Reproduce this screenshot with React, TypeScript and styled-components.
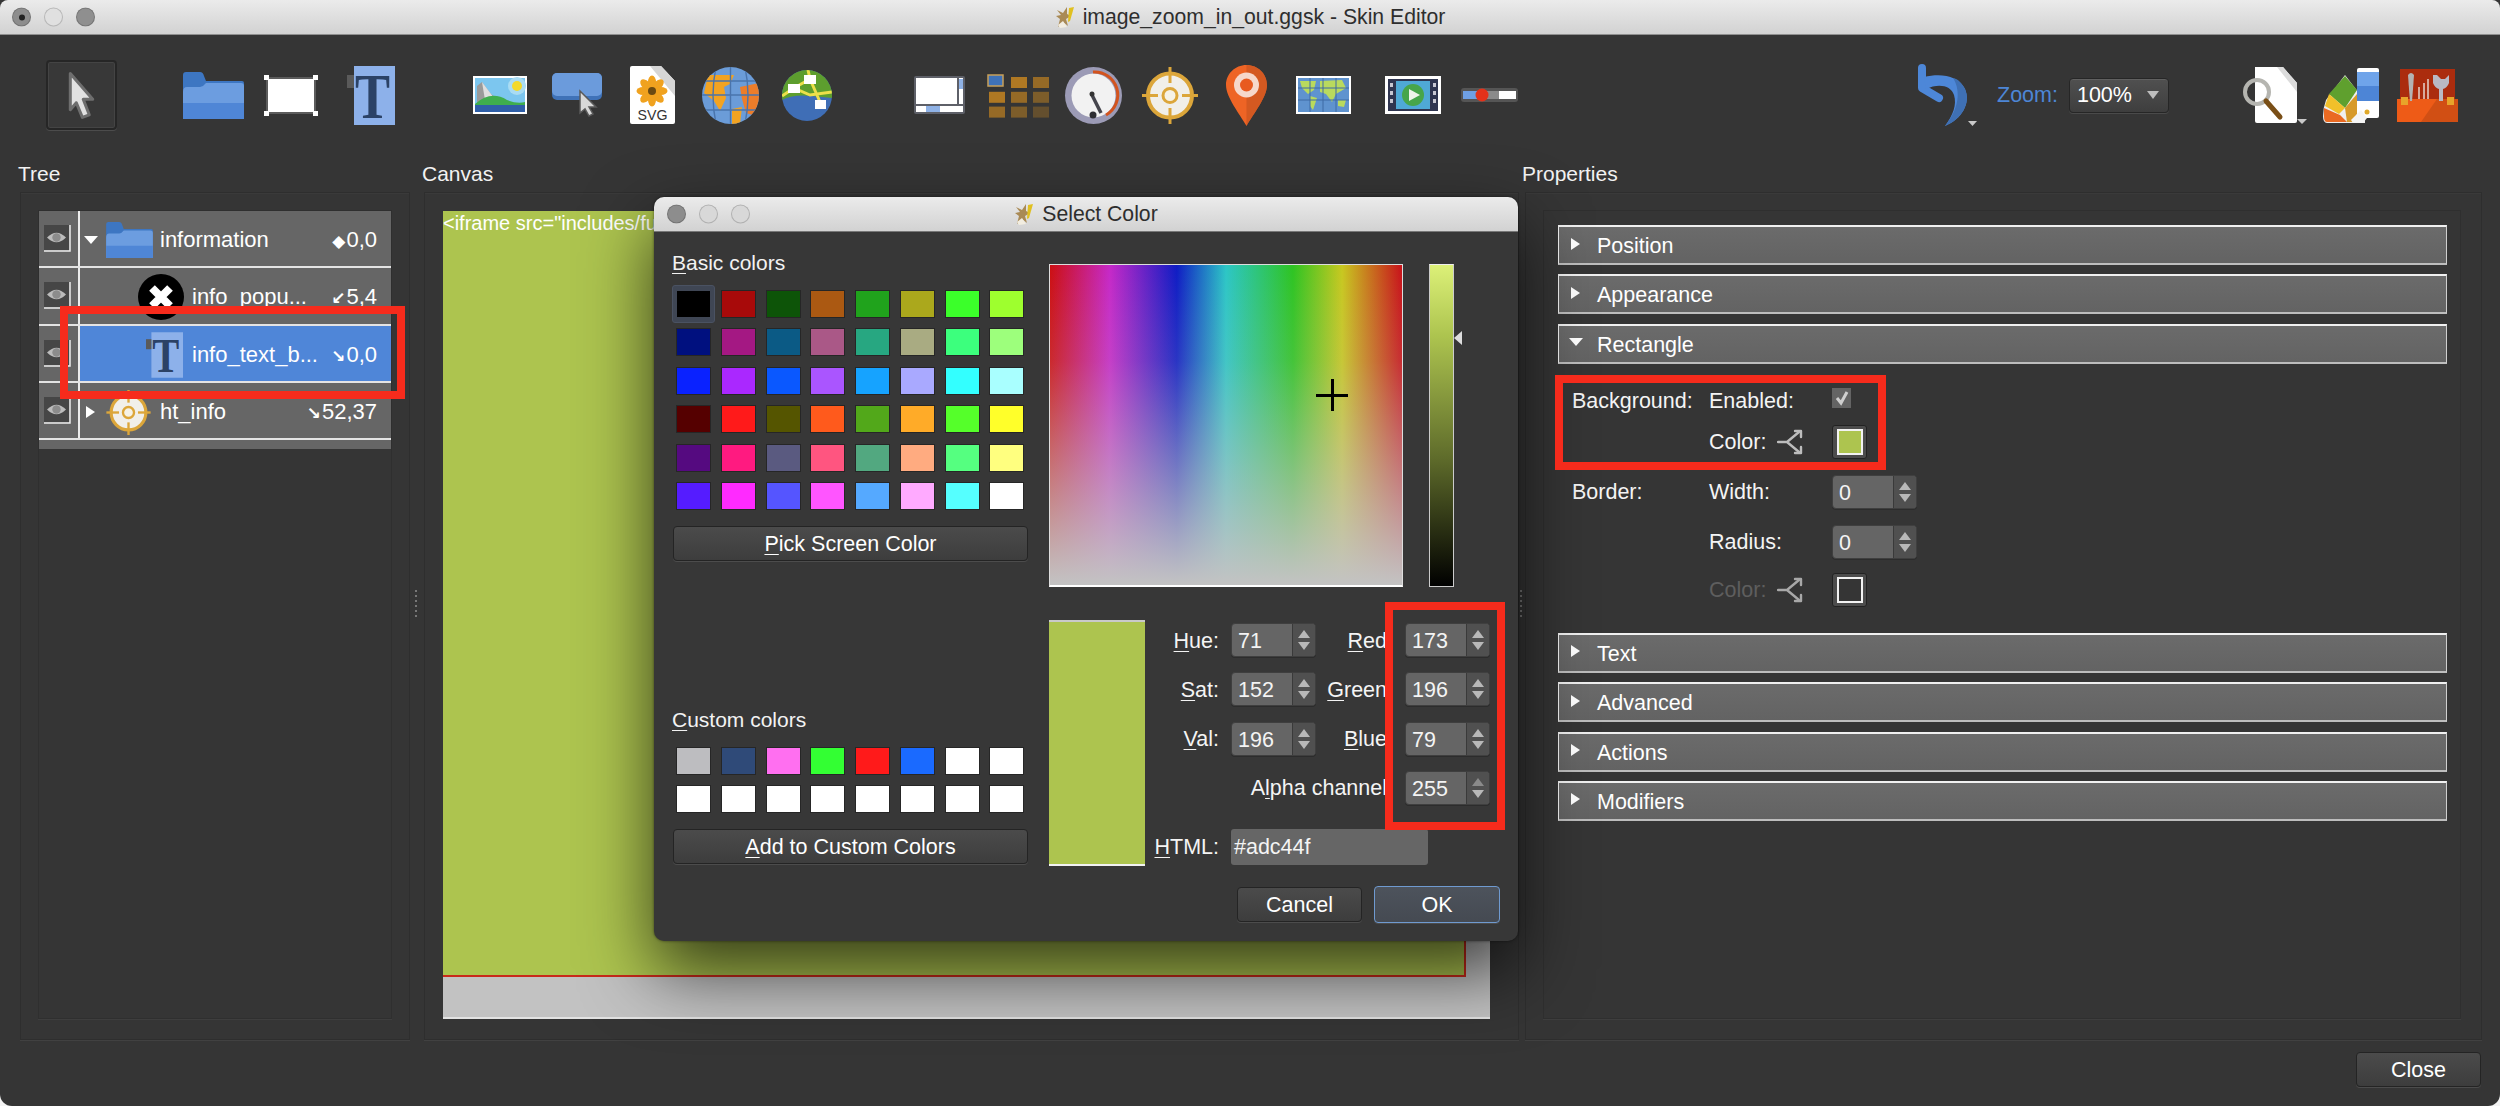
import React from "react";
import styled, { createGlobalStyle } from "styled-components";

const Global = createGlobalStyle`
  html, body { margin: 0; padding: 0; width: 2500px; height: 1106px; overflow: hidden; background: #f4f4f4; }
  #root { width: 2500px; height: 1106px; }
  * { box-sizing: border-box; }
`;

const FONT = `"Liberation Sans", Arial, "DejaVu Sans", sans-serif`;

const Win = styled.div`
  position: relative; width: 2500px; height: 1106px; background: #353535; overflow: hidden;
  border-radius: 0 0 12px 12px; display: flex; flex-direction: column;
  font-family: ${FONT}; font-size: 21.5px; color: #f4f4f4;
`;
const TitleBar = styled.div`
  position: relative; height: 35px; flex: none; display: flex; align-items: center; justify-content: center; gap: 8px;
  background: linear-gradient(#ebebeb, #d2d2d2); border-bottom: 1px solid #8f8f8f;
  color: #2e2e2e; font-size: 21.2px; border-radius: 8px 8px 0 0;
`;
const Lights = styled.div`
  position: absolute; top: 50%; transform: translateY(-50%); left: ${p => p.$left}px; display: flex; gap: ${p => p.$gap}px;
`;
const Light = styled.span`
  width: 19px; height: 19px; border-radius: 50%; border: 1px solid rgba(0,0,0,.18); position: relative;
  background: ${p => p.$c};
  &::after { content: ${p => (p.$dot ? '""' : "none")}; position: absolute; left: 6px; top: 6px; width: 6px; height: 6px; border-radius: 50%; background: #222; }
`;
const Toolbar = styled.div`
  height: 120px; flex: none; display: flex; align-items: center;
`;
const Slot = styled.div`
  flex: none; margin-left: ${p => p.$ml}px; display: flex; align-items: center;
  svg { display: block; overflow: visible; }
`;
const ArrowBtn = styled.div`
  width: 71px; height: 70px; border: 2px solid #262626; border-radius: 4px; background: #383838; box-shadow: 0 1px 0 #4c4c4c, inset 0 0 0 1px #444;
  display: flex; align-items: center; justify-content: center;
`;
const ZoomLabel = styled.span` color: #4d86d6; font-size: 21.5px; `;
const Combo = styled.div`
  width: 100px; height: 35px; border-radius: 4px; border: 1px solid #262626; box-shadow: inset 0 1px 0 #606060, 0 1px 0 #4a4a4a;
  background: linear-gradient(#505050, #3e3e3e); display: flex; align-items: center; justify-content: space-between; padding: 0 9px 0 7px;
  color: #fff; font-size: 21.5px;
`;
const Main = styled.div` flex: none; height: 885px; display: flex; padding-left: 18px; `;
const Column = styled.div` flex: none; width: ${p => p.$w}px; display: flex; flex-direction: column; `;
const PanelLabel = styled.div` height: 37px; line-height: 37px; flex: none; color: #f2f2f2; font-size: 21px; `;
const Frame = styled.div`
  flex: 1; margin-left: ${p => p.$ml}px; border: 1px solid #2e2e2e; box-shadow: 0 1px 0 #414141, inset 0 1px 0 #3a3a3a; background: #353535;
  padding: ${p => p.$pad}; display: flex; min-height: 0;
`;
const Handle = styled.div`
  flex: none; width: ${p => p.$w}px; display: flex; flex-direction: column; align-items: center; justify-content: center; gap: 3px; padding-top: 11px;
  i { display: block; width: 2px; height: 2px; background: #777; }
`;
const Inner = styled.div`
  flex: 1; border: 1px solid #2f2f2f; box-shadow: 0 1px 0 #3e3e3e; position: relative; display: flex; flex-direction: column;
`;
const Rows = styled.div` display: flex; flex-direction: column; background: #666; padding-bottom: 9px; `;
const Row = styled.div`
  height: 57.3px; display: flex; align-items: stretch; border-bottom: 2px solid #e4e4e4; position: relative;
`;
const EyeCell = styled.div`
  width: 41px; flex: none; border-right: 2px solid #ececec; display: flex; align-items: center; justify-content: center; padding-right: 3px;
`;
const RowBody = styled.div`
  flex: 1; display: flex; align-items: center; padding: 3px 14px 0 ${p => p.$indent}px; background: ${p => (p.$sel ? "#4f86d8" : "transparent")}; min-width: 0; color: #fff; font-size: 22px;
`;
const Twist = styled.span` flex: none; width: 22px; display: flex; align-items: center; `;
const TriDown = styled.i`
  display: block; width: 0; height: 0; border-left: ${p => p.$s}px solid transparent; border-right: ${p => p.$s}px solid transparent; border-top: ${p => p.$s + 1}px solid #fff;
`;
const TriRight = styled.i`
  display: block; width: 0; height: 0; margin-left: 2px; border-top: ${p => p.$s}px solid transparent; border-bottom: ${p => p.$s}px solid transparent; border-left: ${p => p.$s + 3}px solid #fff;
`;
const RowIcon = styled.span` flex: none; width: ${p => p.$w}px; display: flex; margin-right: ${p => p.$mr}px; svg { display: block; overflow: visible; } `;
const RowValue = styled.span` margin-left: auto; white-space: nowrap; display: flex; align-items: baseline; gap: 1px; `;
const Glyph = styled.span` font-family: "DejaVu Sans", sans-serif; font-weight: 700; font-size: 17px; `;
const RedBox = styled.div`
  position: absolute; left: ${p => p.$l}px; top: ${p => p.$t}px; width: ${p => p.$w}px; height: ${p => p.$h}px; border: 8px solid #f62b1c; pointer-events: none; z-index: 5;
`;
const CanvasSurface = styled.div`
  flex: 1; background: #c2c2c2; border-bottom: 2px solid #e2e2e2; display: flex; align-items: flex-start; overflow: hidden;
`;
const GreenArea = styled.div`
  width: 1023px; height: 766px; background: #adc44f; border-right: 2px solid #c92a1a; border-bottom: 2px solid #c92a1a; color: #fff; font-size: 20px; line-height: 24px; white-space: nowrap; overflow: hidden;
`;
const PropsInner = styled(Inner)` padding: 14px 13px 0 14px; `;
const Section = styled.div`
  height: 40px; flex: none; margin-bottom: ${p => p.$mb}px; display: flex; align-items: center; background: linear-gradient(#6b6b6b, #636363);
  border: 1px solid #cfcfcf; border-top: 2px solid #f0f0f0; border-left-color: #f0f0f0; border-bottom: 2px solid #bdbdbd; padding: 3px 0 0 10px; color: #fff; font-size: 21.5px;
`;
const SecTwist = styled.span` width: 28px; flex: none; display: flex; align-items: center; margin-top: -6px; `;
const Form = styled.div` position: relative; height: 269px; margin-top: -9.4px; padding-top: 20.5px; display: flex; flex-direction: column; `;
const FormRow = styled.div` height: 34px; flex: none; display: flex; align-items: center; margin-top: ${p => p.$mt}px; color: ${p => (p.$off ? "#5e5e5e" : "#f4f4f4")}; `;
const FLabelA = styled.span` width: 151px; padding-left: 14px; flex: none; `;
const FLabelB = styled.span` width: 123px; flex: none; display: flex; align-items: center; gap: 11px; `;
const Check = styled.span`
  width: 19px; height: 20px; background: #646464; display: flex; align-items: center; justify-content: center; margin-top: -6px;
`;
const Well = styled.span`
  width: 35px; height: 34px; border-radius: 3px; background: #4c4c4c; border: 1px solid #222; display: flex; align-items: center; justify-content: center;
`;
const WellInner = styled.span` width: 26px; height: 26px; border: 2px solid #f2f2f2; background: ${p => p.$c}; `;
const Footer = styled.div` flex: 1; display: flex; justify-content: flex-end; align-items: flex-start; padding: 12px 19px 0 0; `;
const Btn = styled.button`
  width: ${p => p.$w}px; height: ${p => p.$h || 35}px; display: block; flex: none; padding: 2px 0 0; margin: 0 0 0 ${p => p.$ml || 0}px;
  font-family: ${FONT}; font-size: 21.5px; color: #fff; border-radius: 4px;
  border: 1px solid ${p => (p.$primary ? "#6f9ad0" : "#242424")};
  background: ${p => (p.$primary ? "linear-gradient(#4d535c, #454a52)" : "linear-gradient(#4b4b4b, #3d3d3d)")};
  box-shadow: 0 1px 0 #4c4c4c;
`;
const Dialog = styled.div`
  position: absolute; left: 654px; top: 197px; width: 864px; height: 744px; background: #373737; border-radius: 10px;
  box-shadow: 0 30px 70px rgba(0,0,0,.7), 0 0 3px rgba(0,0,0,.5); display: flex; flex-direction: column; z-index: 3; overflow: visible;
`;
const DlgTitle = styled(TitleBar)` border-radius: 10px 10px 0 0; border-bottom: 1px solid #777; `;
const DlgBody = styled.div` flex: 1; display: flex; padding: 19px 18px 0; gap: 21px; `;
const LeftCol = styled.div` width: 356px; flex: none; display: flex; flex-direction: column; `;
const RightCol = styled.div` width: 451px; flex: none; display: flex; flex-direction: column; padding-top: 13px; `;
const GroupLabel = styled.div` height: 24px; line-height: 24px; font-size: 21px; color: #f2f2f2; margin-top: ${p => p.$mt}px; `;
const U = styled.span` text-decoration: underline; text-underline-offset: 3px; text-decoration-thickness: 1px; `;
const SwatchGrid = styled.div`
  display: grid; grid-template-columns: repeat(8, 33px); column-gap: 11.75px; grid-auto-rows: 26px; row-gap: ${p => p.$rg}px; margin: ${p => p.$mt}px 0 17px 5px;
`;
const Swatch = styled.div`
  position: relative; background: ${p => p.$c}; box-shadow: 0 0 0 1px rgba(0,0,0,.3);
  &::before { content: ${p => (p.$sel ? '""' : "none")}; position: absolute; left: -5px; right: -5px; top: -6px; bottom: -6px; background: #3f4654; border: 1px solid #4a5262; border-radius: 3px; z-index: 0; }
  &::after { content: ${p => (p.$sel ? '""' : "none")}; position: absolute; inset: 0; background: ${p => p.$c}; z-index: 1; }
`;
const TopRow = styled.div` height: 323px; flex: none; display: flex; position: relative; `;
const Picker = styled.div`
  width: 354px; flex: none; position: relative; border: 1px solid #ddd; border-bottom: 2px solid #fff;
  background: linear-gradient(to bottom, rgba(195,195,195,0) 0%, rgba(195,195,195,.15) 30%, rgba(195,195,195,1) 100%),
    linear-gradient(to right, #cc0f12 0%, #c628c8 17%, #0f1cc4 36%, #2cc6c6 50%, #2ec422 69%, #c8c81f 83%, #c8121a 100%);
`;
const CrossH = styled.i` position: absolute; left: 266px; top: 129px; width: 32px; height: 3px; background: #000; `;
const CrossV = styled.i` position: absolute; left: 281px; top: 114px; width: 3px; height: 32px; background: #000; `;
const ValueBar = styled.div`
  width: 25px; flex: none; margin-left: 26px; border: 1px solid #ccc; border-top-color: #eee;
  background: linear-gradient(to bottom, #dcf078 0%, #adc44f 22%, #5f6c2b 60%, #000 100%);
`;
const ValueArrow = styled.i`
  position: absolute; left: 405px; top: 67px; width: 0; height: 0; border-top: 7px solid transparent; border-bottom: 7px solid transparent; border-right: 8px solid #ddd;
`;
const BottomRow = styled.div` height: 246px; flex: none; margin-top: 33px; display: flex; `;
const Preview = styled.div` width: 96px; flex: none; background: #adc44f; border-top: 2px solid #c9c9c9; border-bottom: 2px solid #f2f2f2; `;
const FieldGrid = styled.div`
  flex: 1; display: grid; column-gap: 12px; grid-template-columns: 62px 85px 65px 85px;
  grid-template-rows: repeat(4, 34px) 45px; row-gap: 15.3px; padding: 3px 0 0 12px; align-items: center; position: relative;
`;
const FieldLabel = styled.span`
  text-align: right; white-space: nowrap; font-size: 21.5px; justify-self: end; padding-top: 2px; grid-column: ${p => p.$col || "auto"}; align-self: ${p => (p.$end ? "end" : "center")};
  line-height: ${p => (p.$end ? "36px" : "normal")};
`;
const SpinBox = styled.div`
  width: ${p => p.$w || 85}px; height: 34px; border-radius: 4px; display: flex; background: #656565; border: 1px solid #3f3f3f; overflow: hidden; box-shadow: 0 1px 0 #2c2c2c;
`;
const SpinValue = styled.span` flex: 1; line-height: 34px; padding-left: ${p => p.$pl}px; color: #f4f4f4; font-size: 21.5px; `;
const SpinArrows = styled.span`
  width: 23px; flex: none; background: #505050; border-left: 1px solid #3a3a3a; display: flex; flex-direction: column; align-items: center; justify-content: center; gap: 4px;
`;
const Up = styled.i` width: 0; height: 0; border-left: 6px solid transparent; border-right: 6px solid transparent; border-bottom: 8px solid ${p => p.$c || "#b8b8b8"}; `;
const Down = styled.i` width: 0; height: 0; border-left: 6px solid transparent; border-right: 6px solid transparent; border-top: 8px solid ${p => p.$c || "#b8b8b8"}; `;
const HtmlInput = styled.div`
  grid-column: 2 / -1; align-self: end; width: 197px; height: 36px; background: #666; border-radius: 3px; line-height: 36px; padding-left: 3px; font-size: 21.5px; color: #f4f4f4;
`;
const DlgButtons = styled.div` display: flex; justify-content: flex-end; margin-top: 20px; align-items: center; `;

const Spin = ({ v, w, pl = 6, dim }: { v: string; w?: number; pl?: number; dim?: boolean }) => (
  <SpinBox $w={w}><SpinValue $pl={pl}>{v}</SpinValue><SpinArrows><Up $c={dim ? "#8a8a8a" : undefined} /><Down /></SpinArrows></SpinBox>
);

/* ---------- icons ---------- */
const Cursor = () => (
  <svg width="33" height="50" viewBox="0 0 38 58">
    <path d="M6 4 L32 34 L21 34 L28 52 L20 55 L13 38 L6 46 Z" fill="#e2e2e2" stroke="#6e6e6e" strokeWidth="3.5" strokeLinejoin="round" />
  </svg>
);
const Folder = ({ w = 61, h = 47 }: { w?: number; h?: number }) => (
  <svg width={w} height={h} viewBox="0 0 61 47">
    <path d="M0 3 Q0 0 3 0 H17 Q20 0 21 4 L23 9 H59 Q61 9 61 11 V47 H0 Z" fill="#3d76c2" />
    <path d="M0 47 V20 Q0 15 4 15 H17 Q20 15 22 12 L23 11 H58 Q61 11 61 14 V47 Z" fill="#6c9de0" />
    <rect y="31" width="61" height="16" fill="#4f86d6" />
  </svg>
);
const RectIcon = () => (
  <svg width="54" height="41" viewBox="0 0 54 41">
    <rect x="3" y="3" width="48" height="35" fill="#fff" stroke="#5c5c5c" strokeWidth="2" />
    {[[0, 0], [49, 0], [0, 36], [49, 36]].map(([x, y], i) => <rect key={i} x={x} y={y} width="5" height="5" fill="#fff" />)}
  </svg>
);
const TIcon = ({ w = 48, h = 59 }: { w?: number; h?: number }) => (
  <svg width={w} height={h} viewBox="0 0 48 59">
    <rect x="7" width="41" height="59" fill="#8db1ea" />
    <rect y="9" width="7" height="13" fill="#5a5a5a" />
    <text x="8" y="52" fontFamily='"Liberation Serif", serif' fontWeight="700" fontSize="64" fill="#2b4266" textLength="35" lengthAdjust="spacingAndGlyphs">T</text>
  </svg>
);
const ImageIcon = () => (
  <svg width="54" height="38" viewBox="0 0 54 38">
    <rect width="54" height="38" fill="#fff" />
    <rect x="2" y="2" width="50" height="34" fill="#7cc6ef" />
    <circle cx="44" cy="10" r="9" fill="#a9dcf3" /><circle cx="44" cy="10" r="5" fill="#f3d92a" />
    <path d="M4 28 L4 10 L9 6 L18 18 L26 24 Z" fill="#9a9a9a" /><path d="M9 6 L18 18 L22 24 L12 24 Z" fill="#dfdfdf" />
    <path d="M2 28 Q18 14 34 24 Q44 28 52 26 V30 H2 Z" fill="#3fae4e" />
    <rect x="2" y="29" width="50" height="7" fill="#2f5fa8" />
  </svg>
);
const ButtonIcon = () => (
  <svg width="50" height="44" viewBox="0 0 50 44">
    <rect y="0" width="50" height="27" rx="5" fill="#3f72b8" />
    <rect y="0" width="50" height="23" rx="5" fill="#6b9bdc" />
    <path d="M28 18 L44 34 L37 34 L41 41 L37 43 L33 36 L28 40 Z" fill="#d8d8d8" stroke="#5a5a5a" strokeWidth="1.5" />
  </svg>
);
const SvgDoc = () => (
  <svg width="45" height="58" viewBox="0 0 45 58">
    <path d="M2 0 H31 L45 15 V56 Q45 58 43 58 H2 Q0 58 0 56 V2 Q0 0 2 0 Z" fill="#fff" />
    <path d="M20 0 H31 L45 15 V30 Z" fill="#d6d6d6" />
    <g fill="#f0a21f" transform="translate(22 25)">
      {[0, 45, 90, 135, 180, 225, 270, 315].map(a => <ellipse key={a} cx="0" cy="-9" rx="4" ry="6.5" transform={`rotate(${a})`} />)}
      <circle r="4" fill="#6a4a12" />
    </g>
    <text x="22.5" y="54" textAnchor="middle" fontFamily={FONT} fontSize="15" fill="#333" textLength="30" lengthAdjust="spacingAndGlyphs">SVG</text>
  </svg>
);
const Globe = () => (
  <svg width="57" height="57" viewBox="0 0 57 57">
    <defs><clipPath id="gl"><circle cx="28.5" cy="28.5" r="28.5" /></clipPath></defs>
    <g clipPath="url(#gl)">
      <rect width="57" height="57" fill="#6b9cd8" />
      <path d="M6 8 H32 L28 17 L22 20 L24 31 L18 44 L12 34 L2 26 Z" fill="#f2a322" />
      <path d="M38 20 L57 16 V50 L44 46 L40 32 Z" fill="#ec7d2a" />
      <path d="M30 42 L40 40 L38 57 L30 57 Z" fill="#f2a322" />
      <g stroke="#4a74ac" strokeWidth="1.4" fill="none">
        <path d="M0 14 H57 M0 28 H57 M0 43 H57 M14 0 Q8 28 14 57 M28.5 0 V57 M43 0 Q49 28 43 57" />
      </g>
    </g>
  </svg>
);
const Network = () => (
  <svg width="50" height="51" viewBox="0 0 50 51">
    <defs><clipPath id="nt"><ellipse cx="25" cy="25.5" rx="25" ry="25.5" /></clipPath></defs>
    <g clipPath="url(#nt)">
      <rect width="50" height="51" fill="#3f6eb6" />
      <path d="M0 0 H50 V28 L30 26 Q10 24 0 30 Z" fill="#5d9e2e" />
      <g stroke="#ecdf4a" strokeWidth="3" fill="none"><path d="M0 26 L12 18 L28 9 L38 32 M12 18 L28 25 L50 22 M28 9 L26 0" /></g>
      <rect x="6" y="14" width="12" height="9" fill="#fff" /><rect x="22" y="5" width="12" height="9" fill="#fff" /><rect x="33" y="30" width="11" height="9" fill="#fff" />
    </g>
  </svg>
);
const Scroller = () => (
  <svg width="51" height="38" viewBox="0 0 51 38">
    <rect width="51" height="38" rx="2" fill="#5e6068" />
    <rect x="2" y="2" width="41" height="26" fill="#fff" /><rect x="45" y="2" width="4" height="26" fill="#fff" /><rect x="45" y="3" width="4" height="10" fill="#8fb2e6" />
    <rect x="2" y="30" width="47" height="6" fill="#fff" /><rect x="12" y="30" width="14" height="6" fill="#8fb2e6" />
  </svg>
);
const GridIcon = () => (
  <svg width="57" height="43" viewBox="0 0 57 43">
    {[0, 1, 2].map(r => [0, 1, 2].map(c => (
      (r === 0 && c === 0) ? null : <rect key={`${r}${c}`} x={2 + c * 22} y={3 + r * 14.8} width="16" height="11" fill="#c8861f" opacity={1 - (r + c) * 0.17} />
    )))}
    <rect x="1" y="1" width="15" height="11" fill="#3f72b8" stroke="#c8a05a" strokeWidth="1.5" />
  </svg>
);
const Gauge = () => (
  <svg width="57" height="57" viewBox="0 0 57 57">
    <circle cx="28.5" cy="28.5" r="28.5" fill="#9c9bb6" />
    <circle cx="28.5" cy="28.5" r="22" fill="#f2f2f2" />
    <path d="M28 5 A23 23 0 0 1 41 48" fill="none" stroke="#d3541f" strokeWidth="3" />
    <path d="M27 28 L36 46" stroke="#45454d" strokeWidth="3.5" />
    <circle cx="27" cy="27" r="2.5" fill="#333" /><circle cx="28" cy="48" r="3.5" fill="#2e2e33" />
  </svg>
);
const Hotspot = ({ w = 56, h = 57 }: { w?: number; h?: number }) => (
  <svg width={w} height={h} viewBox="0 0 56 57">
    <circle cx="28" cy="28.5" r="22" fill="#f1efe9" stroke="#dca63a" strokeWidth="4" />
    <g fill="#dca63a"><rect x="26.5" y="0" width="3" height="16" /><rect x="26.5" y="41" width="3" height="16" /><rect x="0" y="27" width="16" height="3" /><rect x="40" y="27" width="16" height="3" /></g>
    <circle cx="28" cy="28.5" r="7" fill="#f6f2e6" stroke="#dca63a" strokeWidth="3" />
  </svg>
);
const Pin = () => (
  <svg width="41" height="61" viewBox="0 0 41 61">
    <path d="M20.5 0 C32 0 41 9 41 20 C41 32 28 48 20.5 61 C13 48 0 32 0 20 C0 9 9 0 20.5 0 Z" fill="#ee6425" />
    <path d="M20.5 61 C28 48 41 32 41 20 C41 9 32 0 20.5 0 Z" fill="#c9541f" opacity=".7" />
    <circle cx="20.5" cy="20" r="12.5" fill="#f6d8cb" /><circle cx="20.5" cy="20" r="6.5" fill="#e85a20" />
  </svg>
);
const MapIcon = () => (
  <svg width="55" height="38" viewBox="0 0 55 38">
    <rect width="55" height="38" fill="#fff" />
    <rect x="2" y="2" width="51" height="34" fill="#5f93cf" />
    <path d="M4 5 H20 L18 14 L12 18 L6 12 Z M14 20 L21 22 L17 34 L14 30 Z M24 5 L46 4 L50 12 L40 18 L36 26 L30 18 L24 16 Z M42 24 L50 24 L48 31 L42 30 Z" fill="#b9da5e" />
    <path d="M2 12 H53 M2 24 H53 M14 2 V36 M27 2 V36 M40 2 V36" stroke="#3f6aa4" strokeWidth="1" />
  </svg>
);
const VideoIcon = () => (
  <svg width="56" height="38" viewBox="0 0 56 38">
    <rect width="56" height="38" fill="#fff" />
    <rect x="3" y="3" width="50" height="32" fill="#2f3550" />
    <rect x="11" y="5" width="34" height="28" fill="#4fa9d6" />
    <circle cx="28" cy="19" r="11" fill="#47a54a" /><path d="M24 13 L35 19 L24 25 Z" fill="#eef3ea" />
    {[7, 15, 23].map(y => <g key={y}><rect x="5" y={y} width="3" height="4" fill="#c7c7d2" /><rect x="48" y={y} width="3" height="4" fill="#c7c7d2" /></g>)}
  </svg>
);
const SliderIcon = () => (
  <svg width="57" height="14" viewBox="0 0 57 14">
    <rect width="57" height="14" rx="3" fill="#555" />
    <rect x="2" y="3" width="18" height="8" fill="#6fa0e4" /><rect x="26" y="3" width="12" height="8" fill="#8a8a8a" /><rect x="38" y="3" width="17" height="8" fill="#fff" />
    <circle cx="21" cy="7" r="6.5" fill="#e3321a" />
  </svg>
);
const Undo = () => (
  <svg width="59" height="61" viewBox="0 0 59 61">
    <path d="M4 3 V23 L21 33" fill="none" stroke="#4d87d8" strokeWidth="8" strokeLinecap="round" strokeLinejoin="round" />
    <path d="M6 12 C22 8 40 10 47 24 C53 38 44 54 27 61 C35 50 39 40 36 30 C33 20 20 18 8 24 Z" fill="#4d87d8" />
    <path d="M27 61 C44 54 53 38 47 24 C44 18 40 14 35 13 C41 22 44 40 27 61 Z" fill="#3f70b4" />
    <path d="M50 56 H59 L54.5 61 Z" fill="#c9c9c9" />
  </svg>
);
const DocSearch = () => (
  <svg width="65" height="58" viewBox="0 0 65 58">
    <path d="M12 1 H40 L54 17 V55 Q54 57 52 57 H14 Q12 57 12 55 Z" fill="#fff" />
    <path d="M34 1 H40 L54 17 V26 Z" fill="#dcdcdc" />
    <circle cx="14" cy="26" r="12" fill="none" stroke="#b5b5b0" strokeWidth="4" />
    <path d="M23 35 L37 51" stroke="#7a4f17" strokeWidth="5" strokeLinecap="round" />
    <path d="M54 53 H64 L59 58 Z" fill="#c9c9c9" />
  </svg>
);
const Palette = () => (
  <svg width="56" height="55" viewBox="0 0 56 55">
    <path d="M0 48 Q0 40 3 32 L22 7 L42 33 L42 55 H4 Q0 55 0 48 Z" fill="#efefef" />
    <path d="M6 26 L22 8 L34 22 L22 40 Z" fill="#5fa02e" /><path d="M2 38 L6 26 L22 40 L16 46 Z" fill="#f2c02a" /><path d="M1 40 L17 47 L24 54 H4 Q1 54 1 48 Z" fill="#ea6a22" /><path d="M22 40 L34 26 L38 38 L30 54 H24 Z" fill="#d79a2a" />
    <rect x="34" y="0" width="22" height="50" rx="2" fill="#fff" />
    <rect x="34" y="4" width="22" height="14" fill="#6fa4ea" /><rect x="34" y="18" width="22" height="15" fill="#4d85d6" />
    <circle cx="44" cy="44" r="2.5" fill="#e0a92a" />
    <path d="M28 52 L38 42 L44 50 L40 55 H30 Z" fill="#f5f5f5" />
  </svg>
);
const Tools = () => (
  <svg width="61" height="53" viewBox="0 0 61 53">
    <rect x="3" y="0" width="55" height="32" fill="#ab2c0e" />
    <rect x="0" y="30" width="61" height="23" fill="#ee5b17" /><path d="M24 53 L40 30 H61 V53 Z" fill="#d14f14" />
    <rect x="4" y="28" width="7" height="8" fill="#e8a42a" /><rect x="50" y="28" width="7" height="8" fill="#e8a42a" />
    <path d="M11 6 Q14 2 17 6 L16 20 L15 32 H13 L12 20 Z" fill="#b3b3b3" />
    <path d="M22 30 V18 M27 30 V14 M31 30 V10" stroke="#e6d3cc" strokeWidth="1.5" />
    <path d="M36 6 L36 14 Q38 19 42 20 L42 32 H46 L46 20 Q50 19 52 14 L52 6 L48 10 L44 10 L40 6 Z" fill="#b9b9c4" />
  </svg>
);
const LinkIcon = ({ c = "#bdbdbd" }: { c?: string }) => (
  <svg width="28" height="26" viewBox="0 0 28 26" fill="none" stroke={c} strokeWidth="2.4" strokeLinecap="round" strokeLinejoin="round">
    <path d="M1 13 H10 L22 3 M10 13 L22 23" />
    <path d="M18 2 L24 2 L24 8 M24 18 L24 24 L18 24" />
  </svg>
);
const Eye = () => (
  <svg width="27" height="27" viewBox="0 0 27 27">
    <rect x="0" y="0" width="25" height="25" fill="#464646" />
    <path d="M0 26 H26 V0" fill="none" stroke="#ededed" strokeWidth="1.5" />
    <path d="M3 12.5 Q12.5 3 22 12.5 Q12.5 22 3 12.5 Z" fill="#bcbcbc" />
    <circle cx="12.5" cy="12.5" r="4.2" fill="#8c8c8c" />
  </svg>
);
const CloseDot = () => (
  <svg width="46" height="46" viewBox="0 0 46 46">
    <circle cx="23" cy="23" r="23" fill="#000" />
    <path d="M14 14 L32 32 M32 14 L14 32" stroke="#fff" strokeWidth="8" />
  </svg>
);
const Mascot = () => (
  <svg width="20" height="24" viewBox="0 0 20 24">
    <path d="M2 5 L8 8 L12 2 L12 9 L16 11 L11 14 L13 21 L8 17 L3 22 L5 14 L1 11 L6 10 Z" fill="#a98a55" />
    <path d="M14 3 L19 2 L15 16 L13 17 Z" fill="#e0c020" />
    <path d="M3 20 L8 16 L12 22 L5 23 Z" fill="#f2ede0" />
  </svg>
);
const Check2 = () => (
  <svg width="16" height="16" viewBox="0 0 16 16"><path d="M3 8 L7 13 L13 2" fill="none" stroke="#cfcfcf" strokeWidth="3" /></svg>
);

/* ---------- data ---------- */
const basic = [
  "#000000","#a80a0a","#0d5408","#ab5912","#20a31c","#aba81c","#3bff2a","#9eff2e",
  "#00107f","#a41883","#0b5a85","#aa5887","#27a781","#a9ab82","#3cff7d","#9dff7c",
  "#0a22ff","#aa28ff","#0a58ff","#aa55ff","#16a3ff","#a9a9ff","#33ffff","#a9ffff",
  "#550000","#ff1a1a","#555500","#ff5a1c","#52a81a","#ffab28","#55ff2a","#ffff2a",
  "#550a80","#ff1a80","#5a5a80","#ff5580","#52a880","#ffab80","#55ff80","#ffff7f",
  "#551cff","#ff2aff","#5555ff","#ff55ff","#55a9ff","#ffaaff","#55ffff","#ffffff",
];
const custom = ["#bdbdc0","#2f4a78","#ff6ff0","#33ff33","#ff1a1a","#1a6aff", ...Array(10).fill("#ffffff")];
const tools: [React.ReactNode, number][] = [
  [<ArrowBtn><Cursor /></ArrowBtn>, 46],
  [<Folder />, 66],
  [<RectIcon />, 20],
  [<TIcon />, 29],
  [<ImageIcon />, 78],
  [<ButtonIcon />, 25],
  [<SvgDoc />, 28],
  [<Globe />, 27],
  [<Network />, 23],
  [<Scroller />, 82],
  [<GridIcon />, 22],
  [<Gauge />, 21],
  [<Hotspot />, 20],
  [<Pin />, 28],
  [<MapIcon />, 29],
  [<VideoIcon />, 34],
  [<SliderIcon />, 20],
  [<Undo />, 400],
  [<ZoomLabel>Zoom:</ZoomLabel>, 20],
  [<Combo>100%<Down $c="#bdbdbd" /></Combo>, 11],
  [<DocSearch />, 74],
  [<Palette />, 15],
  [<Tools />, 18],
];
const Handles = ({ w }: { w: number }) => (
  <Handle $w={w}>{[0,1,2,3,4,5].map(i => <i key={i} />)}</Handle>
);

export default function App() {
  return (
    <Win>
      <Global />
      <TitleBar>
        <Lights $left={12} $gap={13}>
          <Light $c="#8d8d8d" $dot /><Light $c="#e0e0e0" /><Light $c="#8f8f8f" />
        </Lights>
        <Mascot /><span>image_zoom_in_out.ggsk - Skin Editor</span>
      </TitleBar>
      <Toolbar>
        {tools.map(([node, ml], i) => <Slot key={i} $ml={ml}>{node}</Slot>)}
      </Toolbar>
      <Main>
        <Column $w={392}>
          <PanelLabel>Tree</PanelLabel>
          <Frame $ml={2} $pad="17px 17px 20px 17px">
            <Inner>
              <Rows>
                <Row>
                  <EyeCell><Eye /></EyeCell>
                  <RowBody $indent={4}>
                    <Twist><TriDown $s={7} /></Twist>
                    <RowIcon $w={47} $mr={7}><Folder w={47} h={36} /></RowIcon>
                    information
                    <RowValue><Glyph>◆</Glyph>0,0</RowValue>
                  </RowBody>
                </Row>
                <Row>
                  <EyeCell><Eye /></EyeCell>
                  <RowBody $indent={58}>
                    <RowIcon $w={46} $mr={8}><CloseDot /></RowIcon>
                    info_popu...
                    <RowValue><Glyph>↙</Glyph>5,4</RowValue>
                  </RowBody>
                </Row>
                <Row>
                  <EyeCell><Eye /></EyeCell>
                  <RowBody $indent={66} $sel>
                    <RowIcon $w={37} $mr={9}><TIcon w={37} h={46} /></RowIcon>
                    info_text_b...
                    <RowValue><Glyph>↘</Glyph>0,0</RowValue>
                  </RowBody>
                </Row>
                <Row>
                  <EyeCell><Eye /></EyeCell>
                  <RowBody $indent={4}>
                    <Twist><TriRight $s={6} /></Twist>
                    <RowIcon $w={45} $mr={9}><Hotspot w={45} h={45} /></RowIcon>
                    ht_info
                    <RowValue><Glyph>↘</Glyph>52,37</RowValue>
                  </RowBody>
                </Row>
              </Rows>
              <RedBox $l={21} $t={95} $w={345} $h={93} />
            </Inner>
          </Frame>
        </Column>
        <Handles w={12} />
        <Column $w={1097}>
          <PanelLabel>Canvas</PanelLabel>
          <Frame $ml={2} $pad="18px 28px 20px 18px">
            <CanvasSurface>
              <GreenArea>&lt;iframe src="includes/fullscreen.html"&gt;</GreenArea>
            </CanvasSurface>
          </Frame>
        </Column>
        <Handles w={3} />
        <Column $w={960}>
          <PanelLabel>Properties</PanelLabel>
          <Frame $ml={3} $pad="17px 20px 20px 17px">
            <PropsInner>
              {["Position", "Appearance", "Rectangle"].map((t, i) => (
                <Section key={t} $mb={9.4}>
                  <SecTwist>{i === 2 ? <TriDown $s={7} /> : <TriRight $s={6} />}</SecTwist>{t}
                </Section>
              ))}
              <Form>
                <RedBox $l={-3} $t={11} $w={331} $h={95} />
                <FormRow $mt={0}><FLabelA>Background:</FLabelA><FLabelB>Enabled:</FLabelB><Check><Check2 /></Check></FormRow>
                <FormRow $mt={7}><FLabelA /><FLabelB>Color:<LinkIcon /></FLabelB><Well><WellInner $c="#adc44f" /></Well></FormRow>
                <FormRow $mt={16}><FLabelA>Border:</FLabelA><FLabelB>Width:</FLabelB><Spin v="0" pl={6} /></FormRow>
                <FormRow $mt={16}><FLabelA /><FLabelB>Radius:</FLabelB><Spin v="0" pl={6} /></FormRow>
                <FormRow $mt={14} $off><FLabelA /><FLabelB>Color:<LinkIcon c="#a8a8a8" /></FLabelB><Well><WellInner $c="#353535" /></Well></FormRow>
              </Form>
              {["Text", "Advanced", "Actions", "Modifiers"].map(t => (
                <Section key={t} $mb={9.4}>
                  <SecTwist><TriRight $s={6} /></SecTwist>{t}
                </Section>
              ))}
            </PropsInner>
          </Frame>
        </Column>
      </Main>
      <Footer><Btn $w={125}>Close</Btn></Footer>

      <Dialog>
        <DlgTitle>
          <Lights $left={13} $gap={13}>
            <Light $c="#8d8d8d" /><Light $c="#d8d8d8" /><Light $c="#d8d8d8" />
          </Lights>
          <Mascot /><span>Select Color</span>
        </DlgTitle>
        <DlgBody>
          <LeftCol>
            <GroupLabel $mt={0}><U>B</U>asic colors</GroupLabel>
            <SwatchGrid $mt={16} $rg={12.4}>
              {basic.map((c, i) => <Swatch key={i} $c={c} $sel={i === 0} />)}
            </SwatchGrid>
            <Btn $w={355} $ml={1}><U>P</U>ick Screen Color</Btn>
            <GroupLabel $mt={147}><U>C</U>ustom colors</GroupLabel>
            <SwatchGrid $mt={16} $rg={12}>
              {custom.map((c, i) => <Swatch key={i} $c={c} />)}
            </SwatchGrid>
            <Btn $w={355} $ml={1}><U>A</U>dd to Custom Colors</Btn>
          </LeftCol>
          <RightCol>
            <TopRow>
              <Picker><CrossH /><CrossV /></Picker>
              <ValueBar />
              <ValueArrow />
            </TopRow>
            <BottomRow>
              <Preview />
              <FieldGrid>
                <FieldLabel><U>H</U>ue:</FieldLabel><Spin v="71" />
                <FieldLabel><U>R</U>ed:</FieldLabel><Spin v="173" />
                <FieldLabel><U>S</U>at:</FieldLabel><Spin v="152" />
                <FieldLabel><U>G</U>reen:</FieldLabel><Spin v="196" />
                <FieldLabel><U>V</U>al:</FieldLabel><Spin v="196" />
                <FieldLabel><U>B</U>lue:</FieldLabel><Spin v="79" />
                <FieldLabel $col="1 / 4">A<U>l</U>pha channel:</FieldLabel><Spin v="255" dim />
                <FieldLabel $end><U>H</U>TML:</FieldLabel><HtmlInput>#adc44f</HtmlInput>
              </FieldGrid>
            </BottomRow>
            <DlgButtons>
              <Btn $w={125}>Cancel</Btn>
              <Btn $w={126} $h={37} $ml={12} $primary>OK</Btn>
            </DlgButtons>
          </RightCol>
        </DlgBody>
        <RedBox $l={731} $t={405} $w={120} $h={228} />
      </Dialog>
    </Win>
  );
}
